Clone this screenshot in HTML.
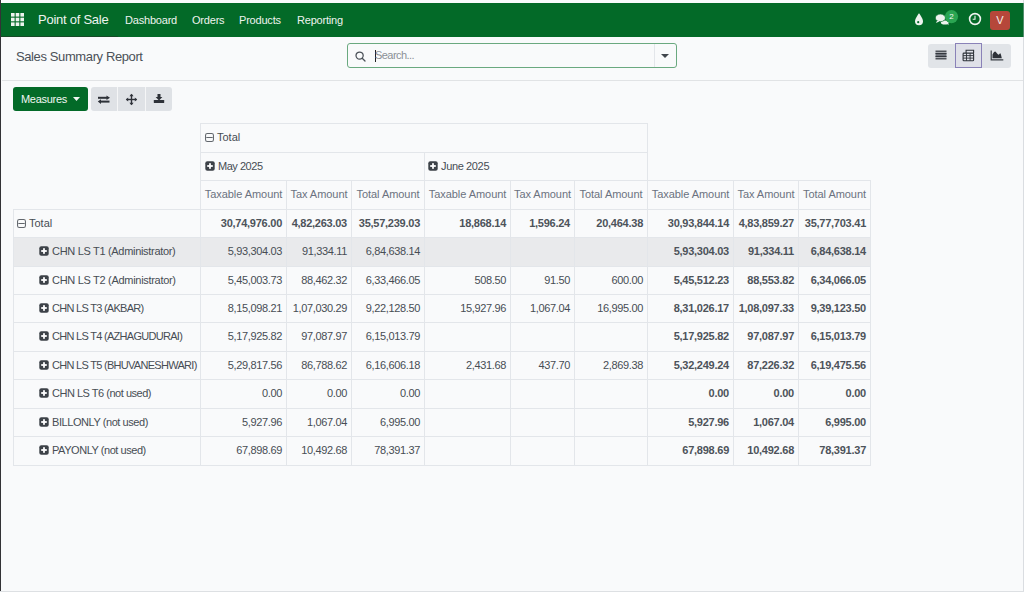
<!DOCTYPE html>
<html><head><meta charset="utf-8"><title>Sales Summary Report</title>
<style>
*{box-sizing:border-box}
html,body{margin:0;padding:0}
body{width:1024px;height:592px;overflow:hidden;position:relative;background:#f9fafb;font-family:"Liberation Sans",sans-serif;color:#474d54}
.hl{position:absolute;height:1px;background:#e3e6ea}
.vl{position:absolute;width:1px;background:#e3e6ea}
.t{position:absolute;white-space:nowrap;font-size:11px}
.ic{display:inline-block;vertical-align:-1px}
.hd{color:#474d54}
.mh{color:#6b7280;text-align:center;letter-spacing:-0.05px}
.rh{color:#474d54}
.num{letter-spacing:-0.35px;color:#474d54}
.num.b{font-weight:bold;letter-spacing:-0.25px;color:#4d535a}
#nav{position:absolute;left:0;top:3px;width:1024px;height:34px;background:#036a28}
#nav .it{position:absolute;top:0;height:34px;line-height:34px;color:#eef3ef;font-size:11px;letter-spacing:-0.2px;white-space:nowrap}
#cp{position:absolute;left:2px;top:80px;width:1021px;height:1px;background:#e1e3e5}
.btn{position:absolute;top:87px;height:24px;border-radius:3px}
</style></head><body>
<div style="position:absolute;left:0;top:0;width:1024px;height:3px;background:#f9fafb"></div>
<div id="nav">
  <svg style="position:absolute;left:11px;top:10px" width="13" height="13" viewBox="0 0 13 13"><g fill="#eef3ef"><rect x="0" y="0" width="3.6" height="3.6"/><rect x="4.7" y="0" width="3.6" height="3.6"/><rect x="9.4" y="0" width="3.6" height="3.6"/><rect x="0" y="4.7" width="3.6" height="3.6"/><rect x="4.7" y="4.7" width="3.6" height="3.6"/><rect x="9.4" y="4.7" width="3.6" height="3.6"/><rect x="0" y="9.4" width="3.6" height="3.6"/><rect x="4.7" y="9.4" width="3.6" height="3.6"/><rect x="9.4" y="9.4" width="3.6" height="3.6"/></g></svg>
  <!-- right icons -->
  <svg style="position:absolute;left:914px;top:10px" width="10" height="13" viewBox="0 0 10 13"><path d="M5 0.2C5 0.2 1 5.2 1 8.2A4 4 0 0 0 9 8.2C9 5.2 5 0.2 5 0.2Z" fill="#eef3ef"/><circle cx="4.2" cy="9.2" r="1.1" fill="#036a28"/></svg>
  <svg style="position:absolute;left:935px;top:10px" width="15" height="13" viewBox="0 0 15 13"><ellipse cx="9.8" cy="9.6" rx="3.9" ry="2" fill="#eef3ef"/><path d="M11.5 10.6L13.8 12.2L12.8 9.6Z" fill="#eef3ef"/><ellipse cx="5.4" cy="4.9" rx="5" ry="3.8" fill="#eef3ef" stroke="#036a28" stroke-width="0.6"/><path d="M2.2 7.6L0.9 10L4.4 8.4Z" fill="#eef3ef"/></svg>
  <svg style="position:absolute;left:944px;top:7px" width="15" height="15" viewBox="0 0 15 15"><circle cx="7.5" cy="6.6" r="6.6" fill="#2aa552"/><text x="7.5" y="9.2" font-family="Liberation Sans" font-size="8" fill="#f4f7f4" text-anchor="middle">2</text></svg>
  <svg style="position:absolute;left:968px;top:9px" width="14" height="14" viewBox="0 0 14 14"><circle cx="7" cy="7" r="5.4" fill="none" stroke="#eef3ef" stroke-width="1.6"/><path d="M7 3.8V7.3H4.7" fill="none" stroke="#eef3ef" stroke-width="1.1"/></svg>
  <div style="position:absolute;left:990px;top:8px;width:20px;height:19px;border-radius:3px;background:#b6473a;color:#f6efe9;font-size:11px;line-height:19px;text-align:center">V</div>
  <div class="it" style="left:38px;font-size:13px;letter-spacing:-0.25px">Point of Sale</div>
  <div class="it" style="left:125px">Dashboard</div>
  <div class="it" style="left:192px">Orders</div>
  <div class="it" style="left:239px">Products</div>
  <div class="it" style="left:297px">Reporting</div>
  <div style="position:absolute;left:0;top:33px;width:118px;height:1px;background:#164a26"></div>
</div>
<div style="position:absolute;left:0;top:0;width:1px;height:592px;background:#333236"></div><div style="position:absolute;left:1px;top:0;width:1px;height:3px;background:#fff"></div>
<div style="position:absolute;left:1023px;top:0;width:1px;height:592px;background:rgba(180,186,192,0.45)"></div>
<div style="position:absolute;left:0;top:591px;width:1024px;height:1px;background:#dde0e3"></div>
<div style="position:absolute;left:16px;top:38px;height:42px;line-height:38px;font-size:13px;letter-spacing:-0.39px;color:#4b5158;white-space:nowrap">Sales Summary Report</div>
<div id="cp"></div>
<!-- search -->
<div style="position:absolute;left:347px;top:43px;width:330px;height:25px;border:1px solid #6aa97f;border-radius:3px;background:#f9fafb"></div>
<div style="position:absolute;left:654px;top:44px;width:1px;height:23px;background:#e3e6ea"></div>
<div style="position:absolute;left:375px;top:50px;width:1px;height:12px;background:#222"></div>
<div style="position:absolute;left:375px;top:43px;height:25px;line-height:25px;font-size:11px;color:#8b9097;white-space:nowrap;letter-spacing:-0.55px">Search...</div>
<svg style="position:absolute;left:355px;top:51px" width="11" height="11" viewBox="0 0 11 11"><circle cx="4.6" cy="4.6" r="3.6" fill="none" stroke="#4b5158" stroke-width="1.25"/><line x1="7.2" y1="7.2" x2="10" y2="10" stroke="#4b5158" stroke-width="1.3" stroke-linecap="round"/></svg>
<svg style="position:absolute;left:661px;top:54px" width="8" height="4" viewBox="0 0 8 4"><path d="M0 0H8L4 4Z" fill="#40464d"/></svg>
<!-- view switcher -->
<div style="position:absolute;left:928px;top:44px;width:83px;height:24px;border-radius:3px;background:#e1e4e8"></div>
<div style="position:absolute;left:955px;top:43px;width:27px;height:25px;border:1px solid #8a82b8;background:#dfe0e8"></div>
<svg style="position:absolute;left:935px;top:50px" width="12" height="10" viewBox="0 0 12 10"><g fill="#2d3138"><rect x="0.5" y="0.6" width="11" height="1.2"/><rect x="0.5" y="2.8" width="11" height="4.4" fill="#6e727a"/><rect x="0.5" y="2.8" width="11" height="1.1"/><rect x="0.5" y="6.1" width="11" height="1.1"/><rect x="0.5" y="8.2" width="11" height="1.2"/></g></svg>
<svg style="position:absolute;left:962px;top:49px" width="13" height="13" viewBox="0 0 13 13"><g fill="none" stroke="#2d3138" stroke-width="1.1"><path d="M4.1 4.1V1.2H11.6V4.1"/><rect x="1.1" y="4.1" width="10.5" height="7.6" rx="0.8"/><path d="M1.1 6.6H11.6M1.1 9.1H11.6M4.5 4.1V11.7M8.1 4.1V11.7" stroke-width="0.9"/></g></svg>
<svg style="position:absolute;left:990px;top:50px" width="14" height="11" viewBox="0 0 14 11"><path d="M1.2 0.5V9.8H13.3" fill="none" stroke="#3a3e45" stroke-width="1.2"/><path d="M2.5 8.3V4.5C3.5 2.5 4.5 1.5 5.2 1.6C6 1.7 7.3 4.3 8.5 4.8C9.3 4.3 9.8 3 10.3 3.2C10.9 3.5 11.4 6.5 11.8 8.3Z" fill="#2d3138"/></svg>
<!-- buttons -->
<div class="btn" style="left:13px;width:75px;background:#036a28"></div>
<div style="position:absolute;left:21px;top:87px;height:24px;line-height:24px;font-size:11px;color:#f2f6f3;white-space:nowrap;letter-spacing:-0.3px">Measures</div>
<svg style="position:absolute;left:73px;top:97px" width="7" height="4" viewBox="0 0 7 4"><path d="M0 0H7L3.5 4Z" fill="#f2f6f3"/></svg>
<div class="btn" style="left:91px;width:81px;background:#dfe2e6"></div>
<div style="position:absolute;left:117px;top:87px;width:1px;height:24px;background:#f5f6f7"></div>
<div style="position:absolute;left:145px;top:87px;width:1px;height:24px;background:#f5f6f7"></div>
<svg style="position:absolute;left:97px;top:94px" width="14" height="11" viewBox="0 0 14 11"><g fill="#2d3138"><rect x="1" y="2.8" width="9" height="2"/><path d="M9.5 1.5L13 3.8L9.5 6.1Z"/><rect x="3.5" y="6.6" width="9" height="2"/><path d="M4 5.3L0.8 7.6L4 9.9Z"/></g></svg>
<svg style="position:absolute;left:125px;top:93px" width="13" height="13" viewBox="0 0 13 13"><g fill="#2d3138"><rect x="1.5" y="5.8" width="10" height="1.4"/><rect x="5.8" y="1.5" width="1.4" height="10"/><path d="M6.5 0.8L8.6 3.2H4.4Z"/><path d="M6.5 12.2L8.6 9.8H4.4Z"/><path d="M0.8 6.5L3.2 4.4V8.6Z"/><path d="M12.2 6.5L9.8 4.4V8.6Z"/></g></svg>
<svg style="position:absolute;left:153px;top:93px" width="12" height="11" viewBox="0 0 12 11"><g fill="#2d3138"><rect x="4.5" y="1" width="3" height="3.5"/><path d="M2.6 4H9.4L6 7.4Z"/><rect x="0.8" y="7" width="10.4" height="3" rx="0.6"/></g></svg>
<div style="position:absolute;left:13px;top:237px;width:857px;height:29px;background:#e9eaec"></div>
<div class="hl" style="left:200px;top:123px;width:448px"></div>
<div class="hl" style="left:200px;top:152px;width:448px"></div>
<div class="hl" style="left:200px;top:180px;width:671px"></div>
<div class="hl" style="left:13px;top:209px;width:858px"></div>
<div class="hl" style="left:13px;top:237px;width:858px"></div>
<div class="hl" style="left:13px;top:266px;width:858px"></div>
<div class="hl" style="left:13px;top:294px;width:858px"></div>
<div class="hl" style="left:13px;top:322px;width:858px"></div>
<div class="hl" style="left:13px;top:351px;width:858px"></div>
<div class="hl" style="left:13px;top:379px;width:858px"></div>
<div class="hl" style="left:13px;top:408px;width:858px"></div>
<div class="hl" style="left:13px;top:436px;width:858px"></div>
<div class="hl" style="left:13px;top:465px;width:858px"></div>
<div class="vl" style="left:200px;top:123px;height:343px"></div>
<div class="vl" style="left:647px;top:123px;height:343px"></div>
<div class="vl" style="left:424px;top:152px;height:314px"></div>
<div class="vl" style="left:286px;top:180px;height:286px"></div>
<div class="vl" style="left:351px;top:180px;height:286px"></div>
<div class="vl" style="left:510px;top:180px;height:286px"></div>
<div class="vl" style="left:574px;top:180px;height:286px"></div>
<div class="vl" style="left:733px;top:180px;height:286px"></div>
<div class="vl" style="left:798px;top:180px;height:286px"></div>
<div class="vl" style="left:870px;top:180px;height:286px"></div>
<div class="vl" style="left:13px;top:209px;height:257px"></div>
<div class="t hd" style="left:205px;top:123px;height:29px;line-height:29px"><svg class="ic" width="9" height="9" viewBox="0 0 9 9"><rect x="0.55" y="0.55" width="7.9" height="7.9" rx="1.8" fill="none" stroke="#62676d" stroke-width="1.05"/><rect x="1.3" y="4" width="6.4" height="1" fill="#62676d"/></svg><span style="margin-left:3px">Total</span></div>
<div class="t hd" style="left:205px;top:152px;height:28px;line-height:28px"><svg class="ic" width="10" height="10" viewBox="0 0 10 10"><rect x="0.3" y="0.3" width="9.4" height="9.4" rx="2" fill="#3d4248"/><rect x="4.1" y="2.2" width="1.8" height="5.6" fill="#fff"/><rect x="2.2" y="4.1" width="5.6" height="1.8" fill="#fff"/></svg><span style="margin-left:3px;letter-spacing:-0.47px">May 2025</span></div>
<div class="t hd" style="left:428px;top:152px;height:28px;line-height:28px"><svg class="ic" width="10" height="10" viewBox="0 0 10 10"><rect x="0.3" y="0.3" width="9.4" height="9.4" rx="2" fill="#3d4248"/><rect x="4.1" y="2.2" width="1.8" height="5.6" fill="#fff"/><rect x="2.2" y="4.1" width="5.6" height="1.8" fill="#fff"/></svg><span style="margin-left:3px;letter-spacing:-0.36px">June 2025</span></div>
<div class="t mh" style="left:201px;width:85px;top:180px;height:29px;line-height:29px">Taxable Amount</div>
<div class="t mh" style="left:287px;width:64px;top:180px;height:29px;line-height:29px">Tax Amount</div>
<div class="t mh" style="left:352px;width:72px;top:180px;height:29px;line-height:29px">Total Amount</div>
<div class="t mh" style="left:425px;width:85px;top:180px;height:29px;line-height:29px">Taxable Amount</div>
<div class="t mh" style="left:511px;width:63px;top:180px;height:29px;line-height:29px">Tax Amount</div>
<div class="t mh" style="left:575px;width:72px;top:180px;height:29px;line-height:29px">Total Amount</div>
<div class="t mh" style="left:648px;width:85px;top:180px;height:29px;line-height:29px">Taxable Amount</div>
<div class="t mh" style="left:734px;width:64px;top:180px;height:29px;line-height:29px">Tax Amount</div>
<div class="t mh" style="left:799px;width:71px;top:180px;height:29px;line-height:29px">Total Amount</div>
<div class="t rh" style="left:17px;top:209px;height:28px;line-height:28px"><svg class="ic" width="9" height="9" viewBox="0 0 9 9"><rect x="0.55" y="0.55" width="7.9" height="7.9" rx="1.8" fill="none" stroke="#62676d" stroke-width="1.05"/><rect x="1.3" y="4" width="6.4" height="1" fill="#62676d"/></svg><span style="margin-left:3px">Total</span></div>
<div class="t num b" style="right:742px;top:209px;height:28px;line-height:28px">30,74,976.00</div>
<div class="t num b" style="right:677px;top:209px;height:28px;line-height:28px">4,82,263.03</div>
<div class="t num b" style="right:604px;top:209px;height:28px;line-height:28px">35,57,239.03</div>
<div class="t num b" style="right:518px;top:209px;height:28px;line-height:28px">18,868.14</div>
<div class="t num b" style="right:454px;top:209px;height:28px;line-height:28px">1,596.24</div>
<div class="t num b" style="right:381px;top:209px;height:28px;line-height:28px">20,464.38</div>
<div class="t num b" style="right:295px;top:209px;height:28px;line-height:28px">30,93,844.14</div>
<div class="t num b" style="right:230px;top:209px;height:28px;line-height:28px">4,83,859.27</div>
<div class="t num b" style="right:158px;top:209px;height:28px;line-height:28px">35,77,703.41</div>
<div class="t rh" style="left:39px;top:237px;height:29px;line-height:29px"><svg class="ic" width="10" height="10" viewBox="0 0 10 10"><rect x="0.3" y="0.3" width="9.4" height="9.4" rx="2" fill="#3d4248"/><rect x="4.1" y="2.2" width="1.8" height="5.6" fill="#fff"/><rect x="2.2" y="4.1" width="5.6" height="1.8" fill="#fff"/></svg><span style="margin-left:3px;letter-spacing:-0.31px">CHN LS T1 (Administrator)</span></div>
<div class="t num" style="right:742px;top:237px;height:29px;line-height:29px">5,93,304.03</div>
<div class="t num" style="right:677px;top:237px;height:29px;line-height:29px">91,334.11</div>
<div class="t num" style="right:604px;top:237px;height:29px;line-height:29px">6,84,638.14</div>
<div class="t num b" style="right:295px;top:237px;height:29px;line-height:29px">5,93,304.03</div>
<div class="t num b" style="right:230px;top:237px;height:29px;line-height:29px">91,334.11</div>
<div class="t num b" style="right:158px;top:237px;height:29px;line-height:29px">6,84,638.14</div>
<div class="t rh" style="left:39px;top:266px;height:28px;line-height:28px"><svg class="ic" width="10" height="10" viewBox="0 0 10 10"><rect x="0.3" y="0.3" width="9.4" height="9.4" rx="2" fill="#3d4248"/><rect x="4.1" y="2.2" width="1.8" height="5.6" fill="#fff"/><rect x="2.2" y="4.1" width="5.6" height="1.8" fill="#fff"/></svg><span style="margin-left:3px;letter-spacing:-0.3px">CHN LS T2 (Administrator)</span></div>
<div class="t num" style="right:742px;top:266px;height:28px;line-height:28px">5,45,003.73</div>
<div class="t num" style="right:677px;top:266px;height:28px;line-height:28px">88,462.32</div>
<div class="t num" style="right:604px;top:266px;height:28px;line-height:28px">6,33,466.05</div>
<div class="t num" style="right:518px;top:266px;height:28px;line-height:28px">508.50</div>
<div class="t num" style="right:454px;top:266px;height:28px;line-height:28px">91.50</div>
<div class="t num" style="right:381px;top:266px;height:28px;line-height:28px">600.00</div>
<div class="t num b" style="right:295px;top:266px;height:28px;line-height:28px">5,45,512.23</div>
<div class="t num b" style="right:230px;top:266px;height:28px;line-height:28px">88,553.82</div>
<div class="t num b" style="right:158px;top:266px;height:28px;line-height:28px">6,34,066.05</div>
<div class="t rh" style="left:39px;top:294px;height:28px;line-height:28px"><svg class="ic" width="10" height="10" viewBox="0 0 10 10"><rect x="0.3" y="0.3" width="9.4" height="9.4" rx="2" fill="#3d4248"/><rect x="4.1" y="2.2" width="1.8" height="5.6" fill="#fff"/><rect x="2.2" y="4.1" width="5.6" height="1.8" fill="#fff"/></svg><span style="margin-left:3px;letter-spacing:-0.72px">CHN LS T3 (AKBAR)</span></div>
<div class="t num" style="right:742px;top:294px;height:28px;line-height:28px">8,15,098.21</div>
<div class="t num" style="right:677px;top:294px;height:28px;line-height:28px">1,07,030.29</div>
<div class="t num" style="right:604px;top:294px;height:28px;line-height:28px">9,22,128.50</div>
<div class="t num" style="right:518px;top:294px;height:28px;line-height:28px">15,927.96</div>
<div class="t num" style="right:454px;top:294px;height:28px;line-height:28px">1,067.04</div>
<div class="t num" style="right:381px;top:294px;height:28px;line-height:28px">16,995.00</div>
<div class="t num b" style="right:295px;top:294px;height:28px;line-height:28px">8,31,026.17</div>
<div class="t num b" style="right:230px;top:294px;height:28px;line-height:28px">1,08,097.33</div>
<div class="t num b" style="right:158px;top:294px;height:28px;line-height:28px">9,39,123.50</div>
<div class="t rh" style="left:39px;top:322px;height:29px;line-height:29px"><svg class="ic" width="10" height="10" viewBox="0 0 10 10"><rect x="0.3" y="0.3" width="9.4" height="9.4" rx="2" fill="#3d4248"/><rect x="4.1" y="2.2" width="1.8" height="5.6" fill="#fff"/><rect x="2.2" y="4.1" width="5.6" height="1.8" fill="#fff"/></svg><span style="margin-left:3px;letter-spacing:-0.71px">CHN LS T4 (AZHAGUDURAI)</span></div>
<div class="t num" style="right:742px;top:322px;height:29px;line-height:29px">5,17,925.82</div>
<div class="t num" style="right:677px;top:322px;height:29px;line-height:29px">97,087.97</div>
<div class="t num" style="right:604px;top:322px;height:29px;line-height:29px">6,15,013.79</div>
<div class="t num b" style="right:295px;top:322px;height:29px;line-height:29px">5,17,925.82</div>
<div class="t num b" style="right:230px;top:322px;height:29px;line-height:29px">97,087.97</div>
<div class="t num b" style="right:158px;top:322px;height:29px;line-height:29px">6,15,013.79</div>
<div class="t rh" style="left:39px;top:351px;height:28px;line-height:28px"><svg class="ic" width="10" height="10" viewBox="0 0 10 10"><rect x="0.3" y="0.3" width="9.4" height="9.4" rx="2" fill="#3d4248"/><rect x="4.1" y="2.2" width="1.8" height="5.6" fill="#fff"/><rect x="2.2" y="4.1" width="5.6" height="1.8" fill="#fff"/></svg><span style="margin-left:3px;letter-spacing:-0.71px">CHN LS T5 (BHUVANESHWARI)</span></div>
<div class="t num" style="right:742px;top:351px;height:28px;line-height:28px">5,29,817.56</div>
<div class="t num" style="right:677px;top:351px;height:28px;line-height:28px">86,788.62</div>
<div class="t num" style="right:604px;top:351px;height:28px;line-height:28px">6,16,606.18</div>
<div class="t num" style="right:518px;top:351px;height:28px;line-height:28px">2,431.68</div>
<div class="t num" style="right:454px;top:351px;height:28px;line-height:28px">437.70</div>
<div class="t num" style="right:381px;top:351px;height:28px;line-height:28px">2,869.38</div>
<div class="t num b" style="right:295px;top:351px;height:28px;line-height:28px">5,32,249.24</div>
<div class="t num b" style="right:230px;top:351px;height:28px;line-height:28px">87,226.32</div>
<div class="t num b" style="right:158px;top:351px;height:28px;line-height:28px">6,19,475.56</div>
<div class="t rh" style="left:39px;top:379px;height:29px;line-height:29px"><svg class="ic" width="10" height="10" viewBox="0 0 10 10"><rect x="0.3" y="0.3" width="9.4" height="9.4" rx="2" fill="#3d4248"/><rect x="4.1" y="2.2" width="1.8" height="5.6" fill="#fff"/><rect x="2.2" y="4.1" width="5.6" height="1.8" fill="#fff"/></svg><span style="margin-left:3px;letter-spacing:-0.48px">CHN LS T6 (not used)</span></div>
<div class="t num" style="right:742px;top:379px;height:29px;line-height:29px">0.00</div>
<div class="t num" style="right:677px;top:379px;height:29px;line-height:29px">0.00</div>
<div class="t num" style="right:604px;top:379px;height:29px;line-height:29px">0.00</div>
<div class="t num b" style="right:295px;top:379px;height:29px;line-height:29px">0.00</div>
<div class="t num b" style="right:230px;top:379px;height:29px;line-height:29px">0.00</div>
<div class="t num b" style="right:158px;top:379px;height:29px;line-height:29px">0.00</div>
<div class="t rh" style="left:39px;top:408px;height:28px;line-height:28px"><svg class="ic" width="10" height="10" viewBox="0 0 10 10"><rect x="0.3" y="0.3" width="9.4" height="9.4" rx="2" fill="#3d4248"/><rect x="4.1" y="2.2" width="1.8" height="5.6" fill="#fff"/><rect x="2.2" y="4.1" width="5.6" height="1.8" fill="#fff"/></svg><span style="margin-left:3px;letter-spacing:-0.43px">BILLONLY (not used)</span></div>
<div class="t num" style="right:742px;top:408px;height:28px;line-height:28px">5,927.96</div>
<div class="t num" style="right:677px;top:408px;height:28px;line-height:28px">1,067.04</div>
<div class="t num" style="right:604px;top:408px;height:28px;line-height:28px">6,995.00</div>
<div class="t num b" style="right:295px;top:408px;height:28px;line-height:28px">5,927.96</div>
<div class="t num b" style="right:230px;top:408px;height:28px;line-height:28px">1,067.04</div>
<div class="t num b" style="right:158px;top:408px;height:28px;line-height:28px">6,995.00</div>
<div class="t rh" style="left:39px;top:436px;height:29px;line-height:29px"><svg class="ic" width="10" height="10" viewBox="0 0 10 10"><rect x="0.3" y="0.3" width="9.4" height="9.4" rx="2" fill="#3d4248"/><rect x="4.1" y="2.2" width="1.8" height="5.6" fill="#fff"/><rect x="2.2" y="4.1" width="5.6" height="1.8" fill="#fff"/></svg><span style="margin-left:3px;letter-spacing:-0.45px">PAYONLY (not used)</span></div>
<div class="t num" style="right:742px;top:436px;height:29px;line-height:29px">67,898.69</div>
<div class="t num" style="right:677px;top:436px;height:29px;line-height:29px">10,492.68</div>
<div class="t num" style="right:604px;top:436px;height:29px;line-height:29px">78,391.37</div>
<div class="t num b" style="right:295px;top:436px;height:29px;line-height:29px">67,898.69</div>
<div class="t num b" style="right:230px;top:436px;height:29px;line-height:29px">10,492.68</div>
<div class="t num b" style="right:158px;top:436px;height:29px;line-height:29px">78,391.37</div>
</body></html>
